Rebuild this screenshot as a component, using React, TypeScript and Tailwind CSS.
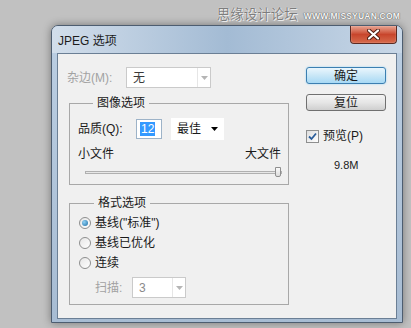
const font = "font-['Liberation_Sans','Noto_Sans_CJK_SC',sans-serif]";

function Arrow({ color = "#000" }: { color?: string }) {
  return (
    <svg width="7" height="4" viewBox="0 0 7 4">
      <path d="M0 0h7L3.5 4z" fill={color} />
    </svg>
  );
}

function Radio({ checked }: { checked?: boolean }) {
  return (
    <span className="w-[12px] h-[12px] rounded-full border border-[#8e8f8f] bg-gradient-to-br from-[#e6e6e6] to-[#ffffff] flex items-center justify-center shrink-0">
      {checked && (
        <span className="w-[6px] h-[6px] rounded-full bg-[radial-gradient(circle_at_35%_35%,#8fd0f5,#1c6ea4)]" />
      )}
    </span>
  );
}

export default function App() {
  return (
    <div className={`w-[411px] h-[328px] bg-[#c1c1c1] overflow-hidden ${font}`}>
      {/* watermark */}
      <div className="h-[25px] flex justify-end items-start pr-[11px] pt-[7px] gap-[6px]">
        <span className="text-[13.5px] leading-[16px] text-[#7d7d7d] [text-shadow:0_0_1px_#fff,1px_1px_0_#e8e8e8]">
          思缘设计论坛
        </span>
        <span className="text-[8.5px] leading-[16px] pt-[1px] tracking-[0.2px] font-bold text-[#f4f4f4] [text-shadow:0_0_1px_#555,0_0_1px_#555]">
          WWW.MISSYUAN.COM
        </span>
      </div>

      {/* window */}
      <div className="ml-[51px] w-[352px] h-[298px] rounded-t-[7px] border border-[#4d5d70] bg-gradient-to-b from-[#bccfe3] to-[#a7bcd3] shadow-[0_0_8px_rgba(0,0,0,0.4)] flex flex-col">
        <div className="h-[27px] shrink-0 flex items-start justify-between rounded-t-[6px] bg-gradient-to-r from-[#d2deeb] via-[#a3bbd4] to-[#c8d7e7]">
          <span className="pl-[6px] pt-[8px] text-[12px] leading-[14px] text-[#1b1b1b]">JPEG 选项</span>
          <div className="mr-[5px] w-[47px] h-[18px] rounded-b-[4px] border border-[#5c2a22] border-t-0 bg-gradient-to-b from-[#e8a491] via-[#c8452c] to-[#d66a4c] shadow-[inset_0_0_1px_#fff] flex items-center justify-center">
            <svg width="13" height="11" viewBox="0 0 13 11">
              <path d="M2 1.5l9 8M11 1.5l-9 8" stroke="#4a1a10" strokeWidth="4" strokeLinecap="round" />
              <path d="M2 1.5l9 8M11 1.5l-9 8" stroke="#fff" strokeWidth="2.2" strokeLinecap="round" />
            </svg>
          </div>
        </div>

        <div className="mx-[5px] mb-[3px] flex-1 border border-[#6b7f95] bg-[#f0f0f0] flex text-[12px] leading-[14px] text-[#1a1a1a]">
          {/* left column */}
          <div className="w-[231px] pl-[11px] pt-[13px]">
            <div className="flex items-center h-[21px] -ml-[2px]">
              <span className="w-[59px] text-[#a2a2a2]">杂边(M):</span>
              <div className="w-[85px] h-[21px] border border-[#cacaca] bg-white flex items-center">
                <span className="flex-1 pl-[6px] text-[#3a3a3a]">无</span>
                <span className="w-[13px] h-full border-l border-[#e6e6e6] flex items-center justify-center">
                  <Arrow color="#b5b5b5" />
                </span>
              </div>
            </div>

            <fieldset className="mt-[7px] w-[220px] h-[90px] border border-[#a8a8a8] pl-[8px]">
              <legend className="ml-[15px] px-[4px] text-[12px] leading-[16px]">图像选项</legend>
              <div className="flex items-center mt-[7px] h-[22px]">
                <span className="w-[58px]">品质(Q):</span>
                <div className="w-[26px] h-[20px] border border-[#9db3c8] bg-white flex items-center pl-[3px]">
                  <span className="bg-[#3399ff] text-white px-[1px]">12</span>
                </div>
                <div className="ml-[9px] w-[53px] h-[22px] bg-white flex items-center justify-between pl-[6px] pr-[6px]">
                  <span>最佳</span>
                  <Arrow />
                </div>
              </div>
              <div className="mt-[7px] flex justify-between pr-[7px]">
                <span>小文件</span>
                <span>大文件</span>
              </div>
              <div className="mt-[6px] ml-[7px] w-[196px] h-[10px] flex items-center">
                <div className="flex-1 h-[3px] border border-[#b0b0b0] bg-[#e7e7e7]" />
                <div className="-ml-[7px] w-[6px] h-[10px] border border-[#8f8f8f] rounded-b-[2px] bg-gradient-to-b from-[#fafafa] to-[#dcdcdc]" />
              </div>
            </fieldset>

            <fieldset className="mt-[10px] w-[220px] h-[110px] border border-[#a8a8a8] pl-[9px]">
              <legend className="ml-[15px] px-[4px] text-[12px] leading-[16px]">格式选项</legend>
              <div className="mt-[5px] flex flex-col gap-[6px]">
                <label className="flex items-center gap-[4px] h-[14px]">
                  <Radio checked />
                  <span>基线("标准")</span>
                </label>
                <label className="flex items-center gap-[4px] h-[14px]">
                  <Radio />
                  <span>基线已优化</span>
                </label>
                <label className="flex items-center gap-[4px] h-[14px]">
                  <Radio />
                  <span>连续</span>
                </label>
              </div>
              <div className="mt-[7px] ml-[16px] flex items-center h-[21px]">
                <span className="w-[37px] text-[#a2a2a2]">扫描:</span>
                <div className="w-[54px] h-[21px] border border-[#cacaca] bg-white flex items-center">
                  <span className="flex-1 pl-[6px] text-[#8a8a8a]">3</span>
                  <span className="w-[13px] h-full border-l border-[#e6e6e6] flex items-center justify-center">
                    <Arrow color="#b5b5b5" />
                  </span>
                </div>
              </div>
            </fieldset>
          </div>

          {/* right column */}
          <div className="ml-[17px] w-[80px] pt-[13px] flex flex-col">
            <button className="h-[17px] rounded-[3px] border border-[#3c7fb1] bg-gradient-to-b from-[#eaf6fd] via-[#c9e7f7] to-[#a7d9f5] shadow-[0_0_2px_#8ed0f5] text-[12px] leading-[14px]">
              确定
            </button>
            <button className="mt-[10px] h-[17px] rounded-[3px] border border-[#707070] bg-gradient-to-b from-[#f4f4f4] via-[#e6e6e6] to-[#cfcfcf] text-[12px] leading-[14px]">
              复位
            </button>
            <label className="mt-[18px] flex items-center gap-[4px] h-[14px]">
              <span className="w-[13px] h-[13px] border border-[#8e8f8f] bg-gradient-to-br from-[#dedede] to-white flex items-center justify-center">
                <svg width="9" height="9" viewBox="0 0 9 9">
                  <path d="M1 4.5l2.5 2.5L8 1.5" stroke="#2a5d9a" strokeWidth="1.8" fill="none" />
                </svg>
              </span>
              <span>预览(P)</span>
            </label>
            <span className="mt-[15px] pl-[28px] text-[11px]">9.8M</span>
          </div>
        </div>
      </div>
    </div>
  );
}
